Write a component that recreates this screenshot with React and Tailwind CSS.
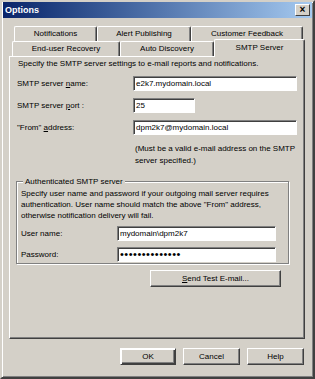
const font = { fontFamily: '"Liberation Sans", Arial, sans-serif' };

const tabBase =
  'flex items-center justify-center h-[15px] bg-[#d4d0c8] border-t border-l border-r border-t-white border-l-white border-r-[#404040] shadow-[inset_-1px_0_#808080] rounded-t-[2px] text-[8px] leading-none';

const input =
  'h-[15px] bg-white border border-t-[#808080] border-l-[#808080] border-r-white border-b-white shadow-[inset_1px_1px_#404040] flex items-center pl-[2px] text-[8px] leading-none';

const button =
  'h-[17px] flex items-center justify-center bg-[#d4d0c8] border border-t-white border-l-white border-r-[#404040] border-b-[#404040] shadow-[inset_-1px_-1px_#808080] text-[8px] leading-none';

function Tab({ label, width, selected }) {
  if (selected) {
    return (
      <div
        className={`${tabBase} relative z-10 -mt-[2px] h-[18px] pb-[2px] border-b-0`}
        style={{ width }}
      >
        {label}
      </div>
    );
  }
  return (
    <div className={tabBase} style={{ width }}>
      {label}
    </div>
  );
}

function FieldRow({ label, value, width = 164 }) {
  return (
    <div className="flex items-center">
      <div className="w-[116px] text-[8px] leading-none">{label}</div>
      <div className={input} style={{ width }}>
        {value}
      </div>
    </div>
  );
}

export default function App() {
  return (
    <div
      className="w-[315px] h-[379px] bg-[#d4d0c8] border-2 border-t-[#d4d0c8] border-l-[#d4d0c8] border-r-[#404040] border-b-[#404040] shadow-[inset_1px_1px_white,inset_-1px_-1px_#808080] text-black overflow-hidden"
      style={font}
    >
      {/* Title bar */}
      <div className="h-[16px] mx-px flex items-center justify-between bg-gradient-to-r from-[#0a246a] to-[#a6caf0] pl-[2px] pr-[2px]">
        <span className="text-white font-bold text-[9px] leading-none">Options</span>
        <div className="w-[15px] h-[12px] bg-[#d4d0c8] border border-t-white border-l-white border-r-[#404040] border-b-[#404040] flex items-center justify-center text-[10px] font-bold leading-none">
          ×
        </div>
      </div>

      <div className="pl-[7px] pr-[8px] mt-[8px]">
        {/* Tabs */}
        <div className="flex ml-[5px]">
          <Tab label="Notifications" width={83} />
          <Tab label="Alert Publishing" width={94} />
          <Tab label="Customer Feedback" width={112} />
        </div>
        <div className="flex ml-[3px] h-[15px]">
          <Tab label="End-user Recovery" width={108} />
          <Tab label="Auto Discovery" width={94} />
          <Tab label="SMTP Server" width={91} selected />
        </div>

        {/* Panel */}
        <div className="h-[283px] border border-t-white border-l-white border-r-[#404040] border-b-[#404040] shadow-[inset_-1px_-1px_#808080] px-[6px] pt-[1px]">
          <div className="ml-[2px] text-[8px] leading-[11px]">
            Specify the SMTP server settings to e-mail reports and notifications.
          </div>

          <div className="flex flex-col gap-[7px] mt-[7px] ml-px">
            <FieldRow
              label={<>SMTP server <u>n</u>ame:</>}
              value="e2k7.mydomain.local"
            />
            <FieldRow label={<>SMTP server <u>p</u>ort :</>} value="25" width={62} />
            <FieldRow
              label={<>"From" <u>a</u>ddress:</>}
              value="dpm2k7@mydomain.local"
            />
          </div>

          <div className="ml-[119px] mt-[8px] text-[8px] leading-[12px]">
            (Must be a valid e-mail address on the SMTP
            <br />
            server specified.)
          </div>

          {/* Group box */}
          <div className="relative mt-[14px] w-[273px] h-[83px] border border-[#808080] shadow-[inset_1px_1px_white,1px_1px_white] pl-[4px] pt-[6px]">
            <div className="absolute -top-[6px] left-[6px] px-[2px] bg-[#d4d0c8] text-[8px] leading-[11px]">
              Authenticated SMTP server
            </div>
            <div className="text-[8px] leading-[11px]">
              Specify user name and password if your outgoing mail server requires
              <br />
              authentication. User name should match the above "From" address,
              <br />
              otherwise notification delivery will fail.
            </div>
            <div className="flex flex-col gap-[6px] mt-[5px]">
              <div className="flex items-center">
                <div className="w-[96px] text-[8px] leading-none">User name:</div>
                <div className={`${input} w-[159px]`}>mydomain\dpm2k7</div>
              </div>
              <div className="flex items-center">
                <div className="w-[96px] text-[8px] leading-none">Password:</div>
                <div className={`${input} w-[159px] text-[11px] tracking-[0.5px]`}>
                  ••••••••••••••
                </div>
              </div>
            </div>
          </div>

          <div className={`${button} ml-[134px] mt-[6px] w-[131px]`}>
            <span>
              <u>S</u>end Test E-mail...
            </span>
          </div>
        </div>

        {/* Dialog buttons */}
        <div className="flex justify-end gap-[7px] mt-[9px] pr-px">
          <div className={`${button} w-[56px] border-black shadow-[inset_1px_1px_white,inset_-1px_-1px_#404040,inset_-2px_-2px_#808080]`}>
            OK
          </div>
          <div className={`${button} w-[57px]`}>Cancel</div>
          <div className={`${button} w-[57px]`}>Help</div>
        </div>
      </div>
    </div>
  );
}
